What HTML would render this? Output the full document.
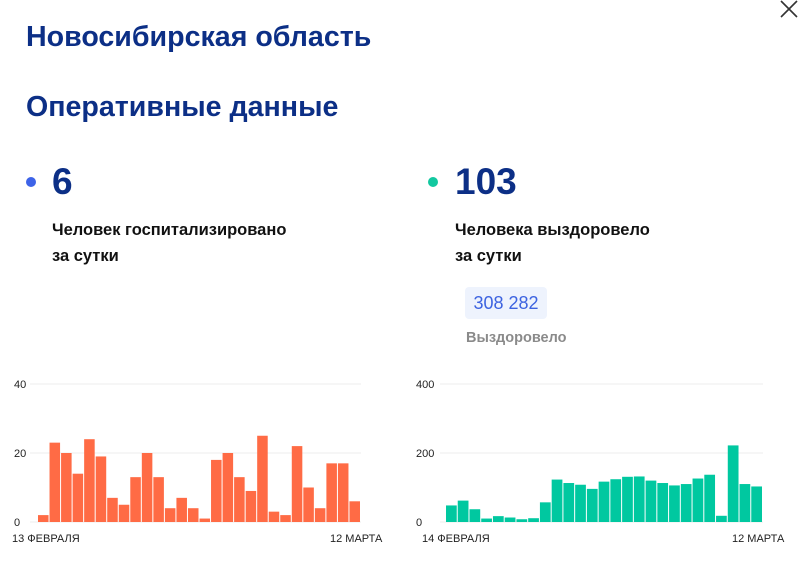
<!DOCTYPE html>
<html><head><meta charset="utf-8"><style>
body{margin:0;width:800px;height:567px;background:#fff;font-family:"Liberation Sans",sans-serif;position:relative;overflow:hidden}
.a{position:absolute;white-space:nowrap}
.h{color:#0c2f86;font-weight:bold;font-size:28.6px}
.n{color:#0c2f86;font-weight:bold;font-size:37px}
.t{color:#111;font-weight:bold;font-size:16.5px;line-height:26px}
.dot{position:absolute;width:10px;height:10px;border-radius:50%}
</style></head><body>
<svg class="a" style="left:778px;top:0" width="22" height="18"><path d="M3 1 L19 17 M19 1 L3 17" stroke="#333" stroke-width="1.6"/></svg>
<div class="a h" style="left:26px;top:21px">Новосибирская область</div>
<div class="a h" style="left:26px;top:91px">Оперативные данные</div>
<div class="dot" style="left:26px;top:177px;background:#3d63e8"></div>
<div class="a n" style="left:52px;top:161px">6</div>
<div class="a t" style="left:52px;top:217px">Человек госпитализировано<br>за сутки</div>
<div class="dot" style="left:428px;top:177px;background:#12c8a0"></div>
<div class="a n" style="left:455px;top:161px">103</div>
<div class="a t" style="left:455px;top:217px">Человека выздоровело<br>за сутки</div>
<div class="a" style="left:465px;top:287px;width:82px;height:32px;background:#eef3fd;border-radius:4px;color:#3d63e0;font-size:18px;line-height:32px;text-align:center">308 282</div>
<div class="a" style="left:466px;top:330px;color:#8a8a8a;font-size:14.5px;font-weight:bold">Выздоровело</div>
<svg class="a" style="left:0;top:370px" width="800" height="197" id="s" font-family="Liberation Sans, sans-serif" font-size="11" fill="#222"></svg>
<script>
var s=document.getElementById('s'),h='';
function chart(x0,x1,gx,vals,max,col,lx,labs,l1,l2,l2x){
 var y0=152,top=14,sc=(y0-top)/max;
 h+='<line x1="'+gx+'" x2="'+x1+'" y1="'+top+'" y2="'+top+'" stroke="#eee"/>';
 h+='<line x1="'+gx+'" x2="'+x1+'" y1="'+(y0-69)+'" y2="'+(y0-69)+'" stroke="#eee"/>';
 h+='<line x1="'+gx+'" x2="'+x1+'" y1="'+y0+'" y2="'+y0+'" stroke="#eee"/>';
 h+='<text x="'+lx+'" y="'+(top+4)+'">'+labs[0]+'</text><text x="'+lx+'" y="'+(y0-65)+'">'+labs[1]+'</text><text x="'+lx+'" y="'+(y0+4)+'">'+labs[2]+'</text>';
 var w=(x1-x0)/vals.length;
 vals.forEach(function(v,i){var hh=v*sc;h+='<rect x="'+(x0+i*w)+'" y="'+(y0-hh)+'" width="'+(w-1)+'" height="'+hh+'" fill="'+col+'"/>';});
 h+='<text x="'+(gx-18)+'" y="'+(y0+20)+'">'+l1+'</text><text x="'+l2x+'" y="'+(y0+20)+'">'+l2+'</text>';
}
chart(38,361,30,[2,23,20,14,24,19,7,5,13,20,13,4,7,4,1,18,20,13,9,25,3,2,22,10,4,17,17,6],40,'#ff6b45',14,['40','20','0'],'13 ФЕВРАЛЯ','12 МАРТА',330);
chart(446,763,440,[48,62,37,10,17,13,8,11,57,123,113,108,96,117,124,131,132,120,113,106,110,126,137,18,222,110,103],400,'#00c8a0',416,['400','200','0'],'14 ФЕВРАЛЯ','12 МАРТА',732);
s.innerHTML=h;
</script>
</body></html>
